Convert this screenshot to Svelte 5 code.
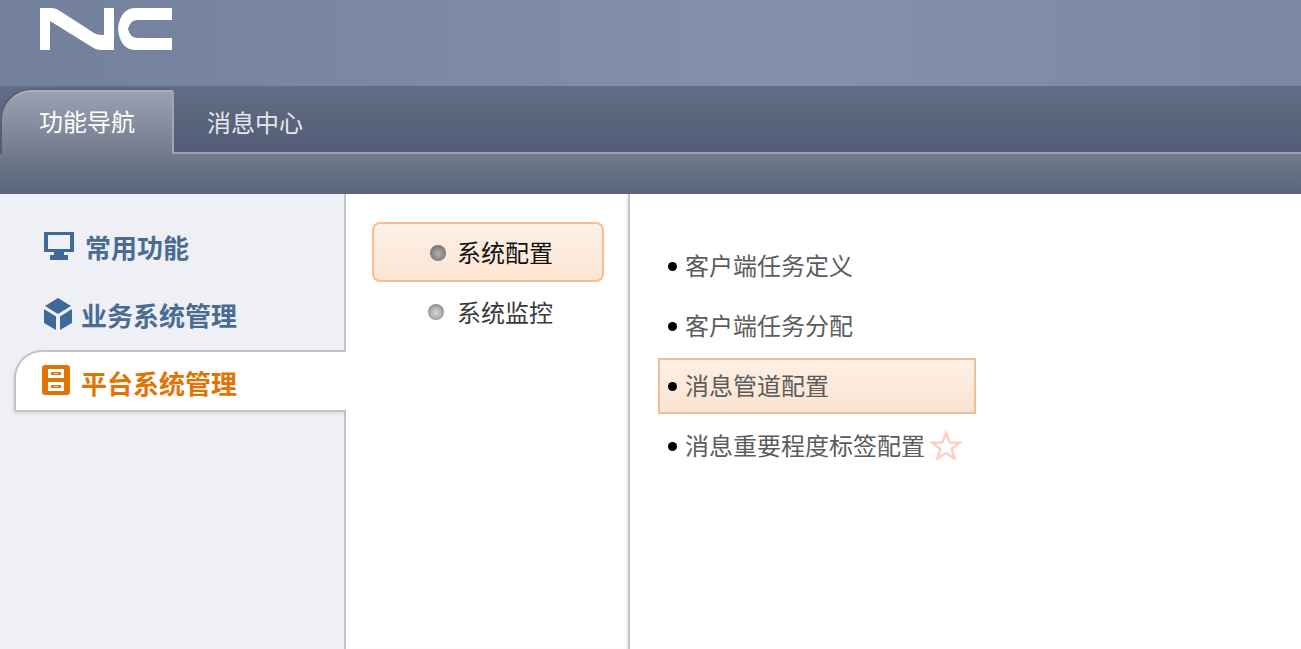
<script>
	const sideItems = [
		{ label: '常用功能', icon: 'monitor' },
		{ label: '业务系统管理', icon: 'cube' },
		{ label: '平台系统管理', icon: 'drawer', active: true }
	];
	const subItems = [
		{ label: '系统配置', active: true },
		{ label: '系统监控' }
	];
	const funcs = [
		{ label: '客户端任务定义' },
		{ label: '客户端任务分配' },
		{ label: '消息管道配置', active: true },
		{ label: '消息重要程度标签配置', star: true }
	];
</script>

<div class="page">
	<header>
		<div class="brand">
			<svg class="logo" width="132" height="42" viewBox="0 0 132 42" aria-label="NC">
				<path fill="#fff" d="M0 0h12q4 0 8 3l34 22q3 2 8 2h2V0h10v42H60q-4 0-8-3L10 13v29H0z" />
				<path fill="#fff" d="M132 0v12H98q-8 0-10 9 2 9 10 9h34v12H96Q80 42 78 21 80 0 96 0z" />
			</svg>
		</div>
		<div class="tabs">
			<div class="tab active">功能导航</div>
			<div class="tab">消息中心</div>
			<div class="tab-rest"></div>
		</div>
		<div class="band"></div>
	</header>

	<main>
		<nav class="side">
			{#each sideItems as item}
				<div class="side-item {item.icon}" class:active={item.active}>
					{#if item.icon === 'monitor'}
						<svg width="30" height="28" viewBox="0 0 30 28">
							<path fill="#3e6a99" fill-rule="evenodd" d="M1 0h28q1 0 1 1v18q0 1-1 1H20v3h4v5H6v-5h4v-3H1q-1 0-1-1V1q0-1 1-1zM4 3v14h22V3z" />
						</svg>
					{:else if item.icon === 'cube'}
						<svg width="28" height="32" viewBox="0 0 28 32">
							<path fill="#3e6a99" d="M14 0 27 8 14 16 1 8zM0 11l12 7.500V32L0 25zM28 11l-12 7.500V32l12-7z" />
						</svg>
					{:else}
						<svg width="28" height="30" viewBox="0 0 28 30">
							<path fill="#e27305" fill-rule="evenodd" d="M3 0h22q3 0 3 3v24q0 3-3 3H3q-3 0-3-3V3q0-3 3-3zM6 4v9h16V4zM6 17v9h16V17z" />
							<path fill="#e27305" d="M9 7h10v3H9zM9 20h10v3H9z" />
							<path fill="#f7c48e" d="M12 8h4v1h-4zM12 21h4v1h-4z" />
						</svg>
					{/if}
					<span>{item.label}</span>
				</div>
			{/each}
		</nav>

		<section class="sub">
			{#each subItems as item}
				<div class="sub-item" class:active={item.active}>
					<i class="ball"></i><span>{item.label}</span>
				</div>
			{/each}
		</section>

		<section class="funcs">
			{#each funcs as item}
				<div class="func" class:active={item.active}>
					<i class="dot"></i><span>{item.label}</span>
					{#if item.star}
						<svg class="star" width="32" height="30" viewBox="0 0 32 30">
							<path fill="none" stroke="#fbcfc4" stroke-width="2.500" d="M16 3l3.600 9.400 10 .3-7.900 6.300 2.800 9.600L16 23l-8.500 5.600 2.800-9.600-7.900-6.300 10-.3z" />
						</svg>
					{/if}
				</div>
			{/each}
		</section>
	</main>
</div>

<style>
	:global(body) {
		margin: 0;
		background: #fff;
		font-family: 'Noto Sans CJK SC', 'Liberation Sans', sans-serif;
		overflow: hidden;
	}

	.page {
		height: 649px;
		display: flex;
		flex-direction: column;
	}

	header {
		height: 194px;
		flex: none;
		display: flex;
		flex-direction: column;
	}

	.brand {
		height: 86px;
		box-sizing: border-box;
		padding: 8px 0 0 40px;
		background: linear-gradient(90deg, #72809c 0%, #8391ae 60%, #7a88a6 100%);
	}

	.logo {
		display: block;
	}

	.tabs {
		height: 68px;
		flex: none;
		display: flex;
		background: linear-gradient(#636d85, #515b75);
	}

	.tab {
		width: 130px;
		flex: none;
		padding: 3px 0 0 33px;
		box-sizing: border-box;
		font-size: 24px;
		line-height: 66px;
		white-space: nowrap;
		color: #e4e6ee;
		border-bottom: 2px solid #9aa0ad;
	}

	.tab.active {
		width: 172px;
		margin: 4px 0 -2px 2px;
		height: 66px;
		padding: 0 0 0 37px;
		line-height: 58px;
		color: #fff;
		border: 0;
		border-top: 2px solid #a9afbe;
		border-right: 2px solid #a0a6b4;
		border-radius: 30px 3px 0 0;
		background: linear-gradient(#9aa1b2, #717a8c);
		box-shadow: -2px -1px 2px #566078;
	}

	.tab-rest {
		flex: 1;
		border-bottom: 2px solid #9aa0ad;
	}

	.band {
		flex: 1;
		background: linear-gradient(#707a8c, #5a647b);
	}

	main {
		flex: 1;
		display: flex;
		min-height: 0;
	}

	.side {
		width: 346px;
		flex: none;
		box-sizing: border-box;
		padding-top: 34px;
		background: #eef0f6;
		border-right: 2px solid #c3c4ca;
	}

	.side-item {
		display: flex;
		align-items: center;
		font-size: 26px;
		font-weight: 700;
		color: #4a6c92;
		box-sizing: border-box;
	}

	.side-item.monitor {
		padding-left: 44px;
		gap: 11px;
		height: 36px;
		margin-bottom: 32px;
	}

	.side-item.cube {
		padding-left: 44px;
		gap: 9px;
		height: 36px;
		margin-bottom: 18px;
	}

	.side-item.active {
		margin-left: 14px;
		margin-right: -2px;
		height: 62px;
		padding: 0 0 0 26px;
		gap: 11px;
		position: relative;
		color: #e27305;
		background: #fff;
		border: 2px solid #c3c4ca;
		border-right: 0;
		border-radius: 28px 0 0 3px;
		box-shadow: -1px 2px 3px rgba(0, 0, 0, 0.08);
	}

	.side-item.active svg {
		margin-top: -2px;
	}

	.side-item.active span {
		margin-top: 2px;
	}

	.sub {
		width: 284px;
		flex: none;
		box-sizing: border-box;
		padding: 28px 24px 0 26px;
		border-right: 2px solid #c3c4ca;
		box-shadow: inset -4px 0 4px -3px #e4e6ec;
	}

	.sub-item {
		height: 60px;
		display: flex;
		align-items: center;
		padding-left: 56px;
		box-sizing: border-box;
		font-size: 24px;
		color: #3a3a3a;
	}

	.sub-item span {
		margin-top: -2px;
	}

	.sub-item.active {
		color: #111;
		border: 2px solid #f0bf98;
		border-radius: 8px;
		background: linear-gradient(#fdf0e5, #fce5d4);
	}

	.ball {
		width: 16px;
		height: 16px;
		margin-right: 13px;
		border-radius: 50%;
		background: radial-gradient(circle at 50% 55%, #d8d8d8, #b0b0b0 45%, #777 90%);
	}

	.sub-item.active .ball {
		margin: 2px 11px 0 0;
		background: radial-gradient(circle at 50% 55%, #b4b4b4, #8c8c8c 45%, #666 90%);
	}

	.funcs {
		flex: 1;
		padding: 42px 0 0 28px;
	}

	.func {
		width: 318px;
		height: 60px;
		display: flex;
		align-items: center;
		box-sizing: border-box;
		padding-left: 10px;
		font-size: 24px;
		color: #5c5c5c;
		white-space: nowrap;
	}

	.func span {
		margin-top: -3px;
	}

	.func.active {
		height: 56px;
		margin: 2px 0;
		border: 2px solid #f0bf98;
		padding-left: 8px;
		background: linear-gradient(#fdf0e5, #fbe3d1);
	}

	.dot {
		width: 9px;
		height: 9px;
		margin: 0 8px 0 0;
		border-radius: 50%;
		background: #000;
	}

	.func .star {
		margin: -2px 0 0 5px;
	}
</style>
